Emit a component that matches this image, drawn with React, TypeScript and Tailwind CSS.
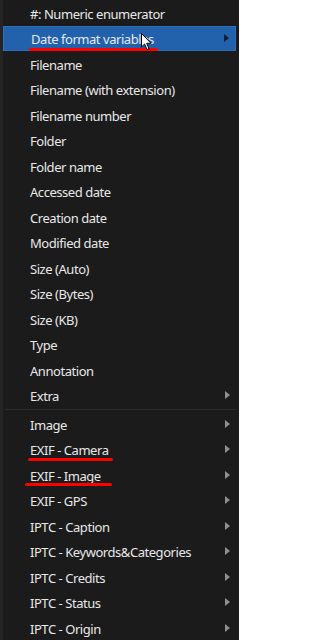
import { ReactNode } from 'react'

interface Item {
  label: string
  sub?: boolean
  active?: boolean
  mark?: string
}

const TOP: Item[] = [
  { label: '#: Numeric enumerator' },
  { label: 'Date format variables', sub: true, active: true, mark: 'left-[25px] w-[129px]' },
  { label: 'Filename' },
  { label: 'Filename (with extension)' },
  { label: 'Filename number' },
  { label: 'Folder' },
  { label: 'Folder name' },
  { label: 'Accessed date' },
  { label: 'Creation date' },
  { label: 'Modified date' },
  { label: 'Size (Auto)' },
  { label: 'Size (Bytes)' },
  { label: 'Size (KB)' },
  { label: 'Type' },
  { label: 'Annotation' },
  { label: 'Extra', sub: true },
]

const BOTTOM: Item[] = [
  { label: 'Image', sub: true },
  { label: 'EXIF - Camera', sub: true, mark: 'left-[25px] w-[85px]' },
  { label: 'EXIF - Image', sub: true, mark: 'left-[22px] w-[87px]' },
  { label: 'EXIF - GPS', sub: true },
  { label: 'IPTC - Caption', sub: true },
  { label: 'IPTC - Keywords&Categories', sub: true },
  { label: 'IPTC - Credits', sub: true },
  { label: 'IPTC - Status', sub: true },
  { label: 'IPTC - Origin', sub: true },
]

function Arrow({ dark }: { dark?: boolean }) {
  return (
    <svg width="5" height="8" viewBox="0 0 5 8" className="shrink-0">
      <path d="M0 0 L5 4 L0 8 Z" fill={dark ? '#0d1f33' : '#8f8f8f'} />
    </svg>
  )
}

function Cursor() {
  return (
    <svg width="12" height="18" viewBox="0 0 12 18" className="absolute left-[137px] top-[6px]">
      <path d="M0.5 0.5 L0.5 14 L3.6 11 L6 16.5 L8 15.6 L5.7 10.3 L10 10.3 Z" fill="#fff" stroke="#000" strokeWidth="1" />
    </svg>
  )
}

function Row({ item }: { item: Item }): ReactNode {
  return (
    <div
      className={`relative flex items-center h-[25.5px] pl-[27px] pr-[6px] ${
        item.active ? 'bg-[#2262ad] border border-[#2f6fba]' : ''
      }`}
    >
      <span className="flex-1 whitespace-nowrap pt-[2px]">{item.label}</span>
      {item.sub && <Arrow dark={item.active} />}
      {item.mark && <div className={`absolute top-[21px] h-[3px] rounded-full bg-[#ff0000] ${item.mark}`} />}
      {item.active && <Cursor />}
    </div>
  )
}

export default function App() {
  return (
    <div
      className="w-[239px] h-[640px] overflow-hidden bg-[#1b1b1b] border-l-[3px] border-[#252525] text-[#e8e8e8] text-[13px] tracking-[-0.45px] leading-[16px]"
      style={{ fontFamily: '"Noto Sans", "Open Sans", sans-serif' }}
    >
      <div className="pr-[3px]">
        {TOP.map((it, i) => (
          <Row key={i} item={it} />
        ))}
        <div className="h-px bg-[#2c2c2c] my-[1px] ml-[2px]" />
        {BOTTOM.map((it, i) => (
          <Row key={i} item={it} />
        ))}
      </div>
    </div>
  )
}
